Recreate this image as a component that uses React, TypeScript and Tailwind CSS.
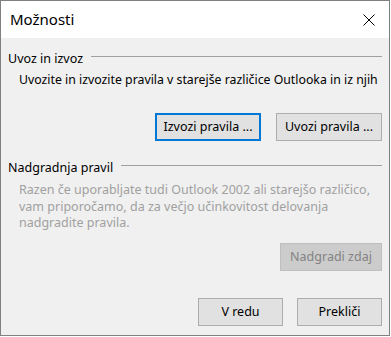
export default function App() {
  return (
    <div className="w-[391px] h-[337px] bg-white">
      <div className="w-[390px] h-[336px] border border-[#808080] bg-[#f0f0f0] flex flex-col font-['Segoe_UI','Noto_Sans',sans-serif] text-[12.5px] leading-[16px] text-black">
        {/* Title bar */}
        <div className="h-[37px] shrink-0 bg-white flex items-center justify-between pl-[9px] pr-[14px]">
          <span className="text-[15px] leading-none">Možnosti</span>
          <svg width="12" height="12" viewBox="0 0 12 12" className="text-black">
            <path d="M0.5 0.5 L11.5 11.5 M11.5 0.5 L0.5 11.5" stroke="currentColor" strokeWidth="1" />
          </svg>
        </div>

        <div className="flex-1 flex flex-col px-[7px] pt-[13px]">
          {/* Uvoz in izvoz */}
          <div className="flex items-center gap-[8px] h-[16px]">
            <span>Uvoz in izvoz</span>
            <div className="flex-1 border-t border-[#a0a0a0] -mt-[5px]" />
          </div>
          <p className="pl-[11px] mt-[5px] whitespace-nowrap text-[12.3px]">
            Uvozite in izvozite pravila v starejše različice Outlooka in iz njih
          </p>
          <div className="flex justify-end gap-[15px] mt-[25px]">
            <button className="w-[106px] h-[28px] bg-[#e1e1e1] border-2 border-[#0078d7]">Izvozi pravila ...</button>
            <button className="w-[106px] h-[28px] bg-[#e1e1e1] border border-[#adadad]">Uvozi pravila ...</button>
          </div>

          {/* Nadgradnja pravil */}
          <div className="flex items-center gap-[8px] h-[16px] mt-[19px]">
            <span>Nadgradnja pravil</span>
            <div className="flex-1 border-t border-[#a0a0a0] -mt-[5px]" />
          </div>
          <p className="pl-[11px] mt-[6px] leading-[16.5px] text-[#a0a0a0] w-[375px]">
            Razen če uporabljate tudi Outlook 2002 ali starejšo različico, vam priporočamo, da za večjo učinkovitost delovanja nadgradite pravila.
          </p>
          <div className="flex justify-end mt-[11px]">
            <button className="w-[102px] h-[28px] bg-[#cccccc] border border-[#bfbfbf] text-[#838383]">Nadgradi zdaj</button>
          </div>

          <div className="flex justify-end gap-[14px] mt-[27px]">
            <button className="w-[85px] h-[28px] bg-[#e1e1e1] border border-[#adadad]">V redu</button>
            <button className="w-[85px] h-[28px] bg-[#e1e1e1] border border-[#adadad]">Prekliči</button>
          </div>
        </div>
      </div>
    </div>
  );
}
